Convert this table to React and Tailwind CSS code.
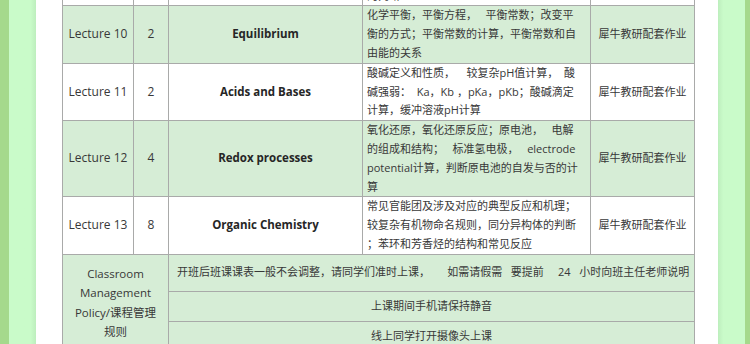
import React from "react";

const rows = [
  {
    lecture: "",
    hours: "",
    topic: "",
    lines: ["热力学第一定律，焓变，熵变；", "吉布斯自由能的计算，反应自发性", "的判断"],
    hw: "",
    green: false,
  },
  {
    lecture: "Lecture 10",
    hours: "2",
    topic: "Equilibrium",
    lines: ["化学平衡，平衡方程，   平衡常数；改变平", "衡的方式；平衡常数的计算，平衡常数和自", "由能的关系"],
    hw: "犀牛教研配套作业",
    green: true,
  },
  {
    lecture: "Lecture 11",
    hours: "2",
    topic: "Acids and Bases",
    lines: ["酸碱定义和性质，    较复杂pH值计算，  酸", "碱强弱：  Ka，Kb ，pKa，pKb；酸碱滴定", "计算，缓冲溶液pH计算"],
    hw: "犀牛教研配套作业",
    green: false,
  },
  {
    lecture: "Lecture 12",
    hours: "4",
    topic: "Redox processes",
    lines: ["氧化还原，氧化还原反应；原电池，   电解", "的组成和结构；   标准氢电极，   electrode", "potential计算，判断原电池的自发与否的计", "算"],
    hw: "犀牛教研配套作业",
    green: true,
  },
  {
    lecture: "Lecture 13",
    hours: "8",
    topic: "Organic Chemistry",
    lines: ["常见官能团及涉及对应的典型反应和机理；", "较复杂有机物命名规则，同分异构体的判断", "；苯环和芳香烃的结构和常见反应"],
    hw: "犀牛教研配套作业",
    green: false,
  },
];

const cell = "border border-[#a9aaa9] p-0 align-middle";

export default function App() {
  return (
    <div
      className="flex h-[344px] w-[750px] overflow-hidden text-[11px] leading-[18.8px] text-[#383838]"
      style={{ fontFamily: '"Open Sans", "Noto Sans CJK SC", sans-serif' }}
    >
      <div className="w-[9px] shrink-0 bg-[#a5d98c]" />
      <div className="w-[27px] shrink-0 bg-gradient-to-r from-[#c9fbc9] from-80% to-[#bdeebd]" />
      <div className="flex-1 bg-white pl-[26px]">
        <table className="-mt-[52px] w-[632px] table-fixed border-collapse">
          <colgroup>
            <col className="w-[71px]" />
            <col className="w-[35px]" />
            <col className="w-[194px]" />
            <col className="w-[228px]" />
            <col className="w-[104px]" />
          </colgroup>
          <tbody>
            {rows.map((r, idx) => (
              <tr key={idx} className={r.green ? "bg-[#d6edd6]" : "bg-white"}>
                <td className={`${cell} text-center text-[12px]`}>{r.lecture}</td>
                <td className={`${cell} text-center text-[12px]`}>{r.hours}</td>
                <td className={`${cell} text-center text-[11.5px] font-bold text-[#262626]`}>{r.topic}</td>
                <td className={`${cell} px-[4px]`}>
                  {r.lines.map((l, i) => (
                    <div key={i} className="whitespace-pre">
                      {l}
                    </div>
                  ))}
                </td>
                <td className={`${cell} text-center`}>{r.hw}</td>
              </tr>
            ))}
            <tr className="h-[37px] bg-[#d6edd6]">
              <td colSpan={2} rowSpan={3} className={`${cell} px-1 text-center text-[11.5px] leading-[19.4px]`}>
                Classroom
                <br />
                Management
                <br />
                Policy/课程管理
                <br />
                规则
              </td>
              <td colSpan={3} className={`${cell} whitespace-pre pl-[8px]`}>
                开班后班课课表一般不会调整，请同学们准时上课，      如需请假需   要提前     24   小时向班主任老师说明
              </td>
            </tr>
            <tr className="h-[30px] bg-[#d6edd6]">
              <td colSpan={3} className={`${cell} text-center`}>
                上课期间手机请保持静音
              </td>
            </tr>
            <tr className="h-[30px] bg-[#d6edd6]">
              <td colSpan={3} className={`${cell} text-center`}>
                线上同学打开摄像头上课
              </td>
            </tr>
          </tbody>
        </table>
      </div>
      <div className="w-[27px] shrink-0 bg-gradient-to-r from-[#bdeebd] from-0% via-[#c9fbc9] via-20% to-[#c9fbc9]" />
      <div className="w-[5px] shrink-0 bg-[#a5d98c]" />
    </div>
  );
}
